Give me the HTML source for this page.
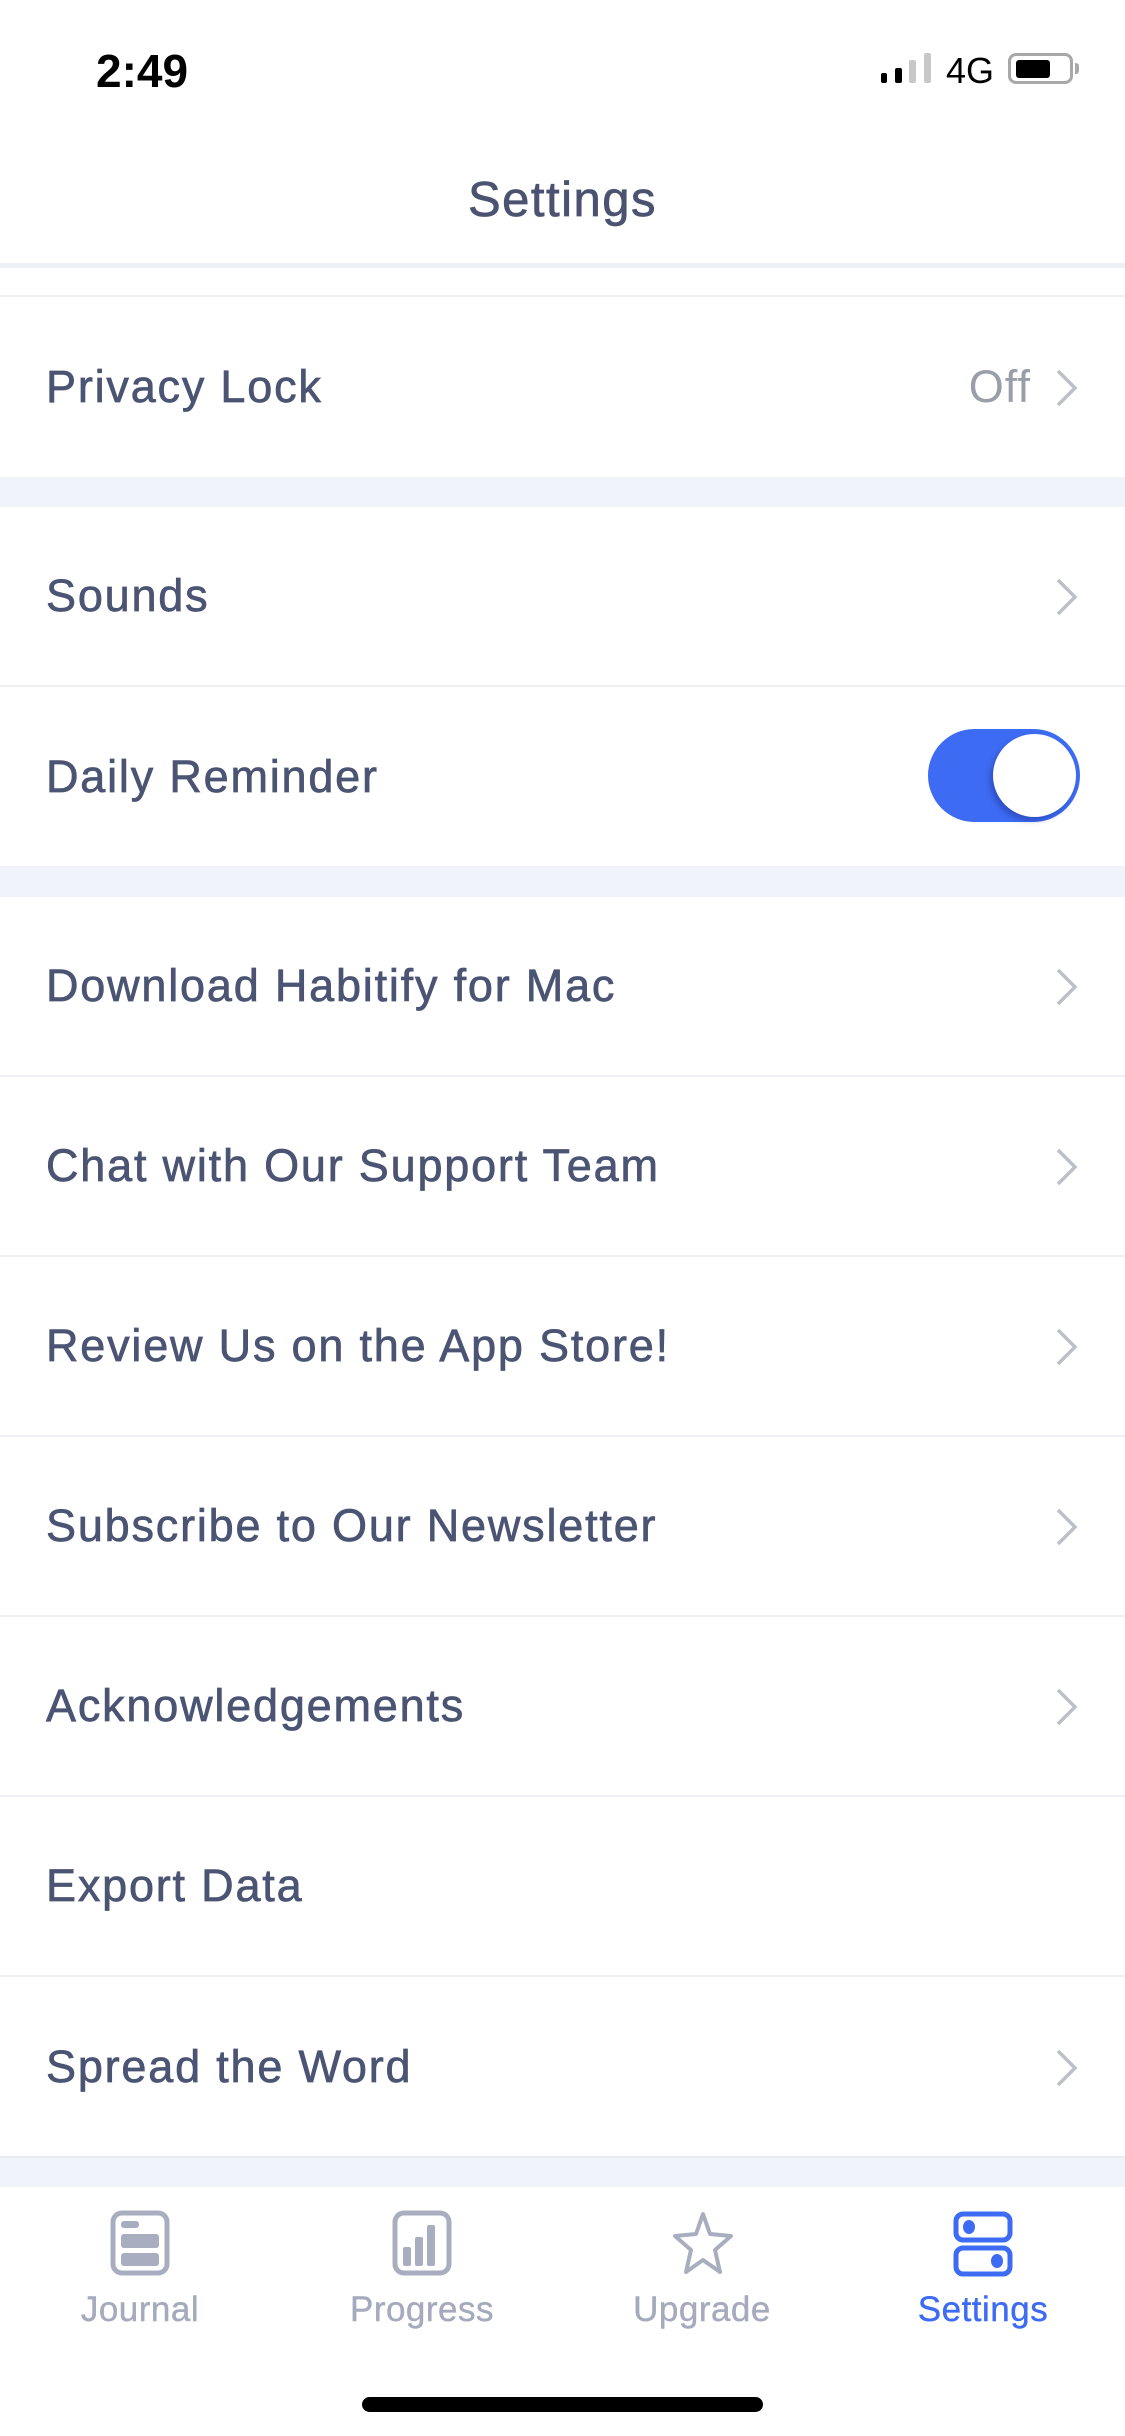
<!DOCTYPE html>
<html><head><meta charset="utf-8"><style>
*{margin:0;padding:0;box-sizing:border-box}
body{width:1125px;height:2436px;background:#fff;font-family:"Liberation Sans",sans-serif;position:relative;overflow:hidden;color:#4b5371}
.abs{position:absolute}
.row{position:absolute;left:0;width:1125px;background:#fff}
.row .t{position:absolute;left:46px;top:50%;transform:translateY(-50%);font-size:45px;letter-spacing:1.8px;color:#4b5473;-webkit-text-stroke:0.7px #4b5473}
.sep{position:absolute;left:0;width:1125px;height:2px;background:#eff0f4}
.gap{position:absolute;left:0;width:1125px;background:#f0f3fa}
.chev{position:absolute;right:45px;top:50%;margin-top:-19px}
.tab{position:absolute;top:2290px;width:260px;text-align:center;font-size:35px;letter-spacing:0.5px;color:#a5aabd;-webkit-text-stroke:0.4px #a5aabd}
</style></head><body>
<div class="abs" style="left:96px;top:44px;font-size:46px;font-weight:bold;color:#000">2:49</div>
<div class="abs" style="left:881px;top:73px;width:6px;height:10px;background:#000;border-radius:2px"></div>
<div class="abs" style="left:895px;top:68px;width:7px;height:15px;background:#000;border-radius:2px"></div>
<div class="abs" style="left:909px;top:60px;width:7px;height:23px;background:#c8c8c8;border-radius:2px"></div>
<div class="abs" style="left:924px;top:53px;width:7px;height:30px;background:#c8c8c8;border-radius:2px"></div>
<div class="abs" style="left:946px;top:50px;font-size:36px;color:#000">4G</div>
<div class="abs" style="left:1008px;top:53px;width:65px;height:31px;border:3px solid #a8a8a8;border-radius:8px"></div>
<div class="abs" style="left:1016px;top:60px;width:34px;height:18px;background:#000;border-radius:3px"></div>
<div class="abs" style="left:1075px;top:63px;width:4px;height:11px;background:#a8a8a8;border-radius:0 3px 3px 0"></div>

<div class="abs" style="left:0;width:1125px;top:172px;text-align:center;font-size:49px;letter-spacing:1.5px;color:#4b5371;-webkit-text-stroke:0.7px #4b5371">Settings</div>
<div class="abs" style="left:0;top:263px;width:1125px;height:5px;background:#eef0f8"></div>
<div class="sep" style="top:295px"></div>

<div class="row" style="top:297px;height:180px"><div class="t">Privacy Lock</div>
<div class="abs" style="right:94px;top:50%;transform:translateY(-50%);font-size:45px;letter-spacing:1px;color:#9a9ea9">Off</div>
<svg class="chev" width="26" height="40" viewBox="0 0 26 40"><path d="M4 3 L21 20 L4 37" fill="none" stroke="#bcbfc7" stroke-width="3.5"/></svg></div>
<div class="gap" style="top:477px;height:30px"></div>
<div class="row" style="top:507px;height:178px"><div class="t">Sounds</div><svg class="chev" width="26" height="40" viewBox="0 0 26 40"><path d="M4 3 L21 20 L4 37" fill="none" stroke="#bcbfc7" stroke-width="3.5"/></svg></div>
<div class="sep" style="top:685px"></div>
<div class="row" style="top:687px;height:179px"><div class="t">Daily Reminder</div>
<div class="abs" style="left:928px;top:42px;width:152px;height:93px;border-radius:47px;background:#3d6bf3"></div>
<div class="abs" style="left:993px;top:47px;width:83px;height:83px;border-radius:50%;background:#fff;box-shadow:-3px 4px 6px rgba(0,0,60,0.25)"></div>
</div>
<div class="gap" style="top:866px;height:31px"></div>

<div class="row" style="top:897px;height:178px"><div class="t">Download Habitify for Mac</div><svg class="chev" width="26" height="40" viewBox="0 0 26 40"><path d="M4 3 L21 20 L4 37" fill="none" stroke="#bcbfc7" stroke-width="3.5"/></svg></div>
<div class="sep" style="top:1075px"></div>
<div class="row" style="top:1077px;height:178px"><div class="t">Chat with Our Support Team</div><svg class="chev" width="26" height="40" viewBox="0 0 26 40"><path d="M4 3 L21 20 L4 37" fill="none" stroke="#bcbfc7" stroke-width="3.5"/></svg></div>
<div class="sep" style="top:1255px"></div>
<div class="row" style="top:1257px;height:178px"><div class="t">Review Us on the App Store!</div><svg class="chev" width="26" height="40" viewBox="0 0 26 40"><path d="M4 3 L21 20 L4 37" fill="none" stroke="#bcbfc7" stroke-width="3.5"/></svg></div>
<div class="sep" style="top:1435px"></div>
<div class="row" style="top:1437px;height:178px"><div class="t">Subscribe to Our Newsletter</div><svg class="chev" width="26" height="40" viewBox="0 0 26 40"><path d="M4 3 L21 20 L4 37" fill="none" stroke="#bcbfc7" stroke-width="3.5"/></svg></div>
<div class="sep" style="top:1615px"></div>
<div class="row" style="top:1617px;height:178px"><div class="t">Acknowledgements</div><svg class="chev" width="26" height="40" viewBox="0 0 26 40"><path d="M4 3 L21 20 L4 37" fill="none" stroke="#bcbfc7" stroke-width="3.5"/></svg></div>
<div class="sep" style="top:1795px"></div>
<div class="row" style="top:1797px;height:178px"><div class="t">Export Data</div></div>
<div class="sep" style="top:1975px"></div>
<div class="row" style="top:1977px;height:179px"><div class="t">Spread the Word</div><svg class="chev" width="26" height="40" viewBox="0 0 26 40"><path d="M4 3 L21 20 L4 37" fill="none" stroke="#bcbfc7" stroke-width="3.5"/></svg></div>
<div class="gap" style="top:2156px;height:31px;border-top:2px solid #e8ebf2"></div>

<svg class="abs" style="left:110px;top:2210px" width="60" height="66" viewBox="0 0 60 66"><rect x="3" y="3" width="54" height="60" rx="9" fill="none" stroke="#a8adc0" stroke-width="5"/><rect x="11" y="11" width="18" height="7" rx="3" fill="#a8adc0"/><rect x="11" y="24" width="38" height="14" rx="3" fill="#a8adc0"/><rect x="11" y="43" width="38" height="13" rx="3" fill="#a8adc0"/></svg>
<svg class="abs" style="left:392px;top:2210px" width="60" height="66" viewBox="0 0 60 66"><rect x="3" y="3" width="54" height="60" rx="9" fill="none" stroke="#a8adc0" stroke-width="5"/><rect x="11" y="37" width="8" height="19" rx="2" fill="#a8adc0"/><rect x="23" y="27" width="8" height="29" rx="2" fill="#a8adc0"/><rect x="35" y="15" width="8" height="41" rx="2" fill="#a8adc0"/></svg>
<svg class="abs" style="left:670px;top:2210px" width="66" height="66" viewBox="0 0 66 66"><path d="M33 4 L40 24 L61 26 L45 40 L50 62 L33 50 L16 62 L21 40 L5 26 L26 24 Z" fill="none" stroke="#a8adc0" stroke-width="4" stroke-linejoin="round"/></svg>
<svg class="abs" style="left:953px;top:2211px" width="60" height="66" viewBox="0 0 60 66"><rect x="3" y="3" width="54" height="26" rx="7" fill="none" stroke="#3d6bf3" stroke-width="5"/><rect x="3" y="37" width="54" height="26" rx="7" fill="none" stroke="#3d6bf3" stroke-width="5"/><ellipse cx="16" cy="16" rx="6" ry="7" fill="#3d6bf3"/><ellipse cx="44" cy="50" rx="6" ry="7" fill="#3d6bf3"/></svg>

<div class="tab" style="left:10px">Journal</div>
<div class="tab" style="left:292px">Progress</div>
<div class="tab" style="left:572px">Upgrade</div>
<div class="tab" style="left:853px;color:#3d6bf3;-webkit-text-stroke:0.4px #3d6bf3">Settings</div>

<div class="abs" style="left:362px;top:2397px;width:401px;height:15px;border-radius:8px;background:#000"></div>
</body></html>
